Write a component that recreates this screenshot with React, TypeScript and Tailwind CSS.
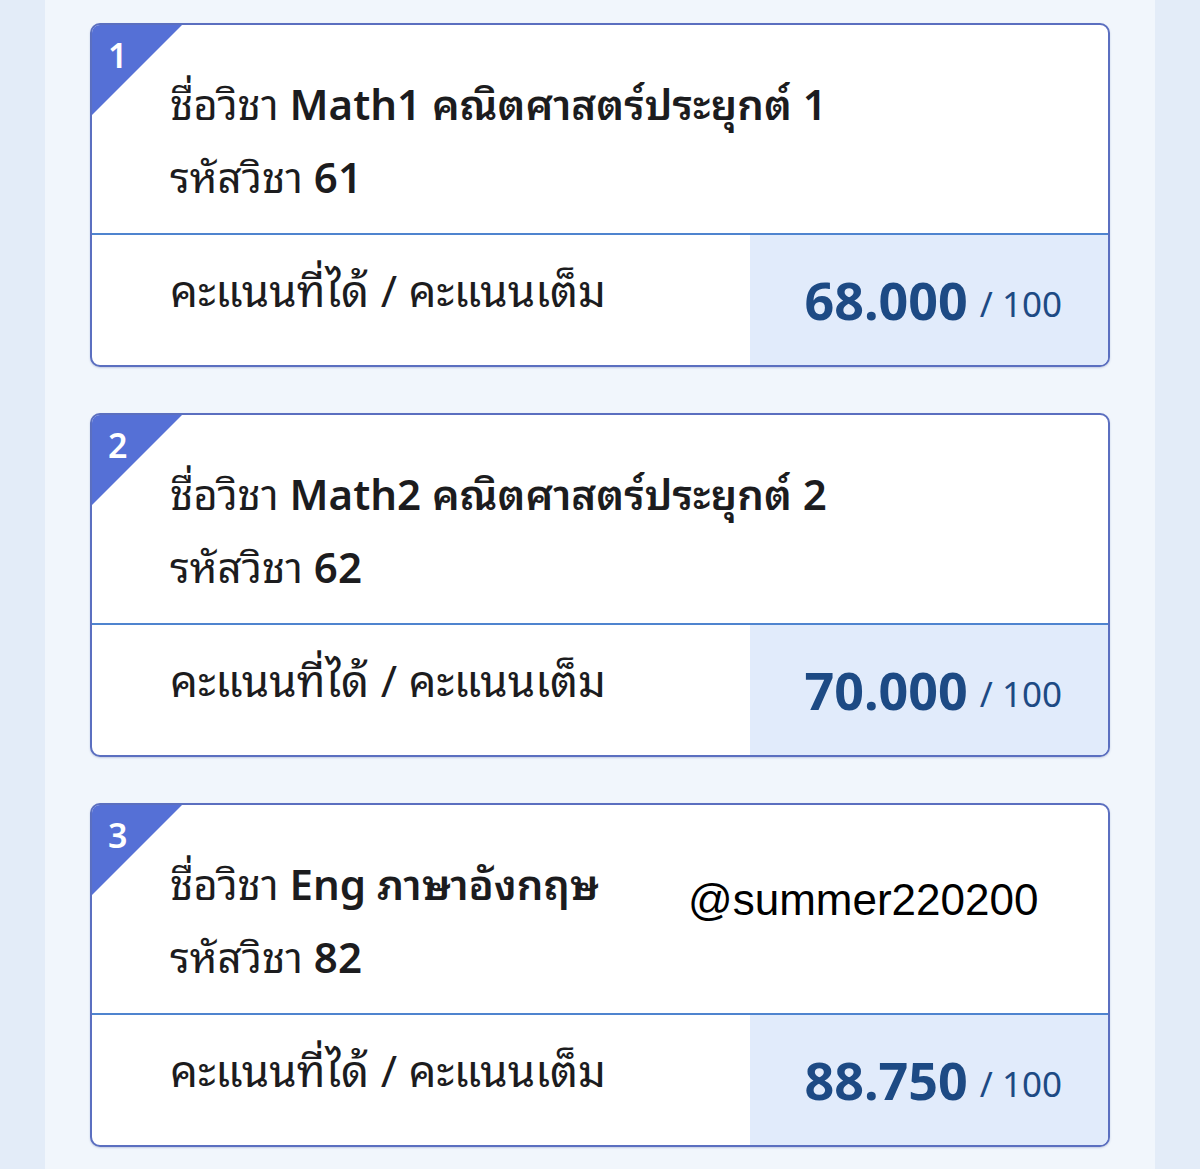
import React from "react";

const items = [
  { n: "1", code: "Math1", name: "คณิตศาสตร์ประยุกต์ 1", id: "61", score: "68.000" },
  { n: "2", code: "Math2", name: "คณิตศาสตร์ประยุกต์ 2", id: "62", score: "70.000" },
  { n: "3", code: "Eng", name: "ภาษาอังกฤษ", id: "82", score: "88.750" },
];

const thai = {
  fontFamily: '"Noto Sans", "Noto Sans Thai Looped", "Noto Sans Thai", "Noto Sans Thai UI", sans-serif',
};

function Card({ it, last }: { it: (typeof items)[number]; last: boolean }) {
  return (
    <div className="relative rounded-[10px] border-2 border-[#5b6fc0] bg-white overflow-hidden shadow-[0_1px_2px_rgba(60,80,150,0.25)]">
      <div
        className="absolute left-0 top-0 w-[90px] h-[90px] bg-[#5570d6]"
        style={{ clipPath: "polygon(0 0, 100% 0, 0 100%)" }}
      />
      <div className="absolute left-[16px] top-[9px] text-white text-[34px] font-semibold leading-[42px]">
        {it.n}
      </div>
      <div className="h-[208px] pl-[78px] pt-[42px] text-[42px] leading-[73px] text-[#1c1c1e]">
        <div>
          ชื่อวิชา <span className="font-semibold">{it.code} {it.name}</span>
        </div>
        <div>
          รหัสวิชา <span className="font-semibold">{it.id}</span>
        </div>
      </div>
      <div className="flex h-[132px] border-t-2 border-[#4f84cf]">
        <div className="flex-1 pl-[78px] pt-[26px] text-[44px] leading-[58px] text-[#1c1c1e]">
          คะแนนที่ได้ / คะแนนเต็ม
        </div>
        <div className="w-[358px] bg-[#e1ebfb] flex items-start justify-end pr-[46px] pt-[34px] text-[#1d4a84]">
          <span className="text-[52px] font-bold leading-[62px]">{it.score}</span>
          <span className="text-[35px] leading-[62px] ml-[12px] pt-[4px]">/ 100</span>
        </div>
      </div>
      {last && (
        <div
          className="absolute left-[596px] top-[70px] text-[44px] leading-[50px] text-black"
          style={{ fontFamily: '"Liberation Sans", Arial, sans-serif' }}
        >
          @summer220200
        </div>
      )}
    </div>
  );
}

export default function App() {
  return (
    <div className="min-h-[1169px] bg-[#e3ecf8] flex justify-center" style={thai}>
      <div className="w-[1110px] bg-[#f1f6fc] px-[45px] pt-[23px] pb-[20px] flex flex-col gap-[46px]">
        {items.map((it, i) => (
          <Card key={it.n} it={it} last={i === 2} />
        ))}
      </div>
    </div>
  );
}
